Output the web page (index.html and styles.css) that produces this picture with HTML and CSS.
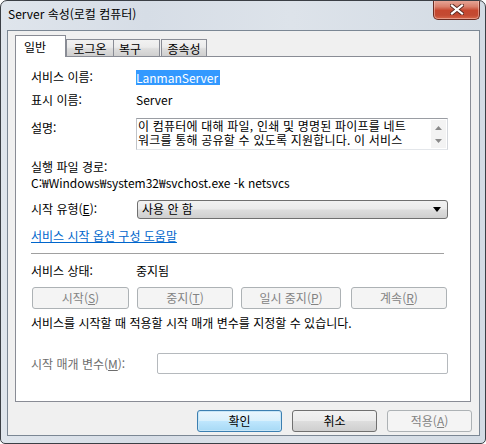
FILE: index.html
```html
<!DOCTYPE html>
<html lang="ko">
<head>
<meta charset="utf-8">
<title>Server 속성</title>
<link rel="stylesheet" href="styles.css">
</head>
<body>
<div class="window">
  <div class="titlebar">
    <span class="title">Server 속성(로컬 컴퓨터)</span>
    <div class="close">
      <svg width="14" height="11" viewBox="0 0 14 11">
        <path d="M2 1.5 L12 9.5 M12 1.5 L2 9.5" stroke="#5a2a22" stroke-width="4" stroke-linecap="square" fill="none"/>
        <path d="M2 1.5 L12 9.5 M12 1.5 L2 9.5" stroke="#ffffff" stroke-width="2.2" stroke-linecap="square" fill="none"/>
      </svg>
    </div>
  </div>
  <div class="client">
    <div class="tabs">
      <div class="tab active">일반</div>
      <div class="tab w-logon">로그온</div>
      <div class="tab w-recover">복구</div>
      <div class="tab w-dep">종속성</div>
    </div>
    <div class="panel">
      <div class="row r1">
        <span class="label">서비스 이름:</span>
        <span class="selected">LanmanServer</span>
      </div>
      <div class="row r2">
        <span class="label">표시 이름:</span>
        <span class="value">Server</span>
      </div>
      <div class="row r3">
        <span class="label label-top">설명:</span>
        <div class="memo">
          <div class="memo-text">
            <div class="memo-line">이 컴퓨터에 대해 파일, 인쇄 및 명명된 파이프를 네트</div>
            <div class="memo-line">워크를 통해 공유할 수 있도록 지원합니다. 이 서비스</div>
          </div>
          <div class="memo-scroll">
            <svg width="7" height="4" viewBox="0 0 7 4"><path d="M0 4 L3.5 0 L7 4 Z" fill="#8a8a8a"/></svg>
            <svg width="7" height="4" viewBox="0 0 7 4"><path d="M0 0 L3.5 4 L7 0 Z" fill="#8a8a8a"/></svg>
          </div>
        </div>
      </div>
      <div class="row r4"><span class="label wide">실행 파일 경로:</span></div>
      <div class="row r5"><span class="value">C:₩Windows₩system32₩svchost.exe -k netsvcs</span></div>
      <div class="row r6">
        <span class="label">시작 유형(<u>E</u>):</span>
        <div class="combo">
          <span>사용 안 함</span>
          <svg width="8" height="5" viewBox="0 0 8 5"><path d="M0 0 L8 0 L4 5 Z" fill="#000"/></svg>
        </div>
      </div>
      <div class="row r7"><span class="link">서비스 시작 옵션 구성 도움말</span></div>
      <div class="separator"></div>
      <div class="row r8">
        <span class="label">서비스 상태:</span>
        <span class="value">중지됨</span>
      </div>
      <div class="row r9">
        <div class="btn disabled b-start">시작(<u>S</u>)</div>
        <div class="btn disabled b-stop">중지(<u>T</u>)</div>
        <div class="btn disabled b-pause">일시 중지(<u>P</u>)</div>
        <div class="btn disabled b-resume">계속(<u>R</u>)</div>
      </div>
      <div class="row r10"><span class="value">서비스를 시작할 때 적용할 시작 매개 변수를 지정할 수 있습니다.</span></div>
      <div class="row r11">
        <span class="label gray param-label">시작 매개 변수(<u>M</u>):</span>
        <div class="param-input"></div>
      </div>
    </div>
    <div class="footer">
      <div class="btn normal default">확인</div>
      <div class="btn normal">취소</div>
      <div class="btn disabled">적용(<u>A</u>)</div>
    </div>
  </div>
</div>
</body>
</html>
```

FILE: styles.css
```css
* { box-sizing: border-box; }

html, body {
  margin: 0;
  padding: 0;
  width: 486px;
  height: 444px;
  overflow: hidden;
  background: #ffffff;
}

body {
  font-family: "Noto Sans CJK KR", "Liberation Sans", sans-serif;
  font-size: 12px;
  color: #000;
}

.window {
  width: 486px;
  height: 444px;
  border: 1px solid #3b3f45;
  border-radius: 7px 7px 5px 5px;
  background: linear-gradient(90deg, #dfe5ec 0%, #d6dde6 30%, #dde3ea 60%, #d3dbe4 100%);
  display: flex;
  flex-direction: column;
  overflow: hidden;
}

.titlebar {
  height: 29px;
  display: flex;
  justify-content: space-between;
  align-items: flex-start;
  padding-left: 7px;
  padding-right: 5px;
}

.title {
  margin-top: 5px;
  line-height: 16px;
  font-size: 12px;
  color: #000;
}

.close {
  width: 47px;
  height: 20px;
  margin-top: -1px;
  border: 1px solid #6b2c22;
  border-top: none;
  border-radius: 0 0 5px 5px;
  background: linear-gradient(180deg, #e8aa9c 0%, #d9806c 35%, #c6472f 55%, #c34a32 80%, #d7674b 100%);
  display: flex;
  align-items: center;
  justify-content: center;
  box-shadow: inset 0 0 0 1px rgba(255, 220, 210, 0.45);
}

.client {
  margin: 0 5px 0 6px;
  height: 406px;
  border: 1px solid #7b8794;
  background: #f0f0f0;
  padding: 4px 7px 3px 7px;
  display: flex;
  flex-direction: column;
}

.tabs {
  height: 21px;
  display: flex;
  align-items: flex-end;
}

.tab {
  height: 17px;
  border: 1px solid #898c95;
  border-bottom: none;
  background: linear-gradient(180deg, #f2f2f2 0%, #ebebeb 45%, #dddddd 55%, #cfcfcf 100%);
  display: flex;
  align-items: center;
  justify-content: center;
  line-height: 14px;
  padding-top: 1px;
}

.tab.active {
  width: 51px;
  height: 22px;
  margin-bottom: -1px;
  background: #ffffff;
  position: relative;
  z-index: 1;
  justify-content: flex-start;
  padding-left: 8px;
  padding-top: 0;
}

.w-logon { width: 48px; }
.w-recover { width: 47px; margin-left: -1px; justify-content: flex-start; padding-left: 5px; }
.w-dep { width: 46px; margin-left: 1px; }

.panel {
  width: 456px;
  height: 346px;
  border: 1px solid #898c95;
  background: #ffffff;
  padding: 0 22px 0 15px;
  display: flex;
  flex-direction: column;
}

.row {
  display: flex;
  align-items: center;
  height: 14px;
  line-height: 14px;
  white-space: nowrap;
}

.label { width: 105px; flex: none; }
.label.wide { width: auto; }
.label-top { align-self: flex-start; padding-top: 3px; }
.gray { color: #6d6d6d; }

.r1 { margin-top: 13px; }
.r2 { margin-top: 9px; }
.r3 { margin-top: 11px; height: 32px; align-items: stretch; }
.r4 { margin-top: 10px; }
.r5 { margin-top: 2px; }
.r6 { margin-top: 9px; height: 20px; }
.r7 { margin-top: 10px; }
.separator { margin-top: 10px; height: 1px; background: #a0a0a0; margin-right: 4px; }
.r8 { margin-top: 10px; }
.r9 { margin-top: 9px; height: 22px; padding-left: 1px; }
.r10 { margin-top: 7px; }
.r11 { margin-top: 23px; height: 21px; }

.selected {
  background: #3399ff;
  color: #ffffff;
  padding: 0 2px 0 0;
  line-height: 15px;
}

.memo {
  width: 312px;
  height: 32px;
  border: 1px solid #abadb3;
  border-color: #9a9da3 #d5d8dd #e3e6ea #c0c4c9;
  display: flex;
  background: #fff;
}

.memo-text {
  flex: 1;
  padding: 0 0 0 1px;
  display: flex;
  flex-direction: column;
}

.memo-line {
  line-height: 14px;
  height: 14px;
  white-space: nowrap;
  letter-spacing: 0.2px;
}

.memo-scroll {
  width: 15px;
  margin: 1px 1px 1px 0;
  background: #f3f3f3;
  display: flex;
  flex-direction: column;
  justify-content: space-between;
  align-items: center;
  padding: 6px 0 5px;
}

.combo {
  width: 311px;
  height: 19px;
  margin-left: 1px;
  border: 1px solid #707070;
  border-radius: 3px;
  background: linear-gradient(180deg, #f2f2f2 0%, #ebebeb 48%, #dddddd 52%, #cfcfcf 100%);
  display: flex;
  align-items: center;
  justify-content: space-between;
  padding: 0 6px 0 4px;
  line-height: 14px;
}

.link {
  color: #0066cc;
  text-decoration: underline;
}

.btn {
  height: 22px;
  border-radius: 3px;
  display: flex;
  align-items: center;
  justify-content: center;
  line-height: 14px;
  flex: none;
}

.btn.disabled {
  border: 1px solid #adb2b5;
  background: #f4f4f4;
  color: #838383;
}

.btn.normal {
  border: 1px solid #707070;
  background: linear-gradient(180deg, #f2f2f2 0%, #ebebeb 48%, #dddddd 52%, #cfcfcf 100%);
  color: #000;
}

.btn.default {
  border-color: #3c7fb1;
  box-shadow: inset 0 0 0 1px #c8e6f7;
  background: linear-gradient(180deg, #eaf6fd 0%, #d9f0fc 48%, #bee6fd 52%, #a7d9f5 100%);
}

.b-start { width: 97px; }
.b-stop { width: 96px; margin-left: 8px; }
.b-pause { width: 100px; margin-left: 8px; }
.b-resume { width: 96px; margin-left: 10px; }

.param-label { width: 126px; }

.param-input {
  width: 291px;
  height: 21px;
  border: 1px solid #b5b9bd;
  border-radius: 2px;
  background: #ffffff;
}

.footer {
  margin-top: 8px;
  height: 22px;
  display: flex;
  justify-content: flex-end;
  gap: 10px;
}

.footer .btn { width: 85px; }
```
